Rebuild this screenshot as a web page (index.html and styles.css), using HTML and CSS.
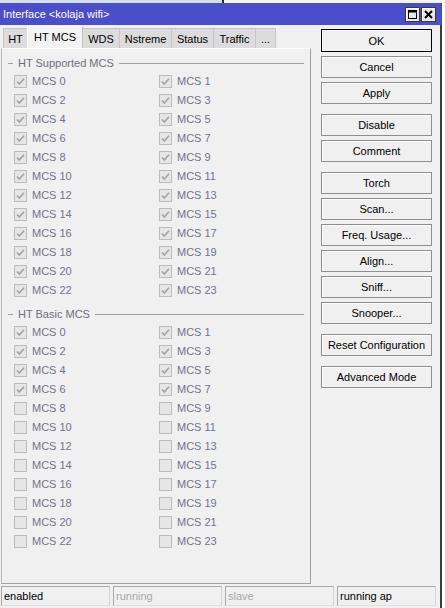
FILE: index.html
```html
<!DOCTYPE html>
<html>
<head>
<meta charset="utf-8">
<link rel="stylesheet" href="styles.css">
</head>
<body>
<div class="strip"></div>
<div class="window">
  <div class="titlebar">
    <span class="title">Interface &lt;kolaja wifi&gt;</span>
    <div class="tbtns">
      <span class="tbtn"><svg width="13" height="13" viewBox="0 0 13 13"><rect x="2.5" y="2.5" width="8" height="8" fill="none" stroke="#000" stroke-width="1"/><line x1="2" y1="3.5" x2="11" y2="3.5" stroke="#000" stroke-width="2"/></svg></span>
      <span class="tbtn"><svg width="13" height="13" viewBox="0 0 13 13"><path d="M3 3 L10 10 M10 3 L3 10" stroke="#000" stroke-width="2" fill="none"/></svg></span>
    </div>
  </div>
  <div class="body">
    <div class="main">
      <div class="left">
        <div class="tabs">
          <div class="tab w24">HT</div>
          <div class="tab active w56">HT MCS</div>
          <div class="tab w36">WDS</div>
          <div class="tab w52">Nstreme</div>
          <div class="tab w42">Status</div>
          <div class="tab w42">Traffic</div>
          <div class="tab w21 last">...</div>
        </div>
        <div class="panel">
          <div class="group">
            <div class="ghead"><span class="gdash"></span><span class="gtitle">HT Supported MCS</span><span class="gline"></span></div>
            <div class="grid" id="g1"></div>
          </div>
          <div class="group g2">
            <div class="ghead"><span class="gdash"></span><span class="gtitle">HT Basic MCS</span><span class="gline"></span></div>
            <div class="grid" id="g2"></div>
          </div>
        </div>
      </div>
      <div class="buttons">
        <div class="bgroup">
          <div class="btn default">OK</div>
          <div class="btn">Cancel</div>
          <div class="btn">Apply</div>
        </div>
        <div class="bgroup">
          <div class="btn">Disable</div>
          <div class="btn">Comment</div>
        </div>
        <div class="bgroup">
          <div class="btn">Torch</div>
          <div class="btn">Scan...</div>
          <div class="btn">Freq. Usage...</div>
          <div class="btn">Align...</div>
          <div class="btn">Sniff...</div>
          <div class="btn">Snooper...</div>
        </div>
        <div class="bgroup">
          <div class="btn">Reset Configuration</div>
        </div>
        <div class="bgroup">
          <div class="btn">Advanced Mode</div>
        </div>
      </div>
    </div>
    <div class="statusbar">
      <div class="cell c1">enabled</div>
      <div class="cell c1 dim">running</div>
      <div class="cell c1 dim">slave</div>
      <div class="cell c4">running ap</div>
    </div>
  </div>
</div>
<script src="script.js"></script>
</body>
</html>
```
FILE: script.js
```js
(function () {
  var checkSvg = '<svg class="cb" width="13" height="13" viewBox="0 0 13 13"><rect x="0.5" y="0.5" width="12" height="12" fill="#e6e6e6" stroke="#bcbcbc"/><polyline points="3,6.5 5.3,9 10,3.8" fill="none" stroke="#a3a3a3" stroke-width="1.6"/></svg>';
  var emptySvg = '<svg class="cb" width="13" height="13" viewBox="0 0 13 13"><rect x="0.5" y="0.5" width="12" height="12" fill="#e6e6e6" stroke="#bcbcbc"/></svg>';
  function fill(id, checkedUpTo) {
    var el = document.getElementById(id);
    var html = '';
    for (var i = 0; i < 24; i++) {
      html += '<div class="item">' + (i < checkedUpTo ? checkSvg : emptySvg) + '<span class="lbl">MCS ' + i + '</span></div>';
    }
    el.innerHTML = html;
  }
  fill('g1', 24);
  fill('g2', 8);
})();
```
FILE: styles.css
```css
html, body {
  margin: 0;
  padding: 0;
  background: #ffffff;
}
body {
  font-family: "Liberation Sans", Arial, sans-serif;
  font-size: 11px;
  color: #000;
  width: 445px;
  height: 608px;
  overflow: hidden;
}
.strip {
  height: 3px;
  width: 445px;
  background: linear-gradient(to right, #d4e0f2 0, #d4e0f2 222px, #2a2a2a 222px, #2a2a2a 224px, #f4f6fa 224px);
}
.window {
  width: 442px;
}
.titlebar {
  height: 22px;
  background: #4a4ecb;
  display: flex;
  align-items: center;
  justify-content: space-between;
}
.title {
  color: #fff;
  padding-left: 3px;
  font-size: 11px;
}
.tbtns {
  display: flex;
  gap: 1px;
  padding-right: 6px;
  margin-top: 1px;
}
.tbtn {
  width: 15px;
  height: 15px;
  box-sizing: border-box;
  border: 1px solid #3a3a3a;
  background: #e8e8e8;
  box-shadow: inset 1px 1px 0 #fff;
  display: flex;
  align-items: center;
  justify-content: center;
}
.body {
  background: #f0f0f0;
  height: 583px;
  box-sizing: border-box;
  border-right: 2px solid #3c3c3c;
}
.main {
  display: flex;
  align-items: flex-start;
}
.left {
  margin-left: 1px;
  width: 310px;
}
.tabs {
  height: 23px;
  display: flex;
  align-items: flex-end;
  padding-left: 2px;
}
.tab {
  height: 20px;
  box-sizing: border-box;
  background: #dcdcdc;
  border-top: 1px solid #c6c6c6;
  border-left: 1px solid #c6c6c6;
  display: flex;
  align-items: center;
  justify-content: center;
  color: #000;
}
.tab.last {
  border-right: 1px solid #c6c6c6;
}
.tab.active {
  height: 22px;
  background: #f3f3f3;
  border-top: 1px solid #fdfdfd;
  border-left: 1px solid #fdfdfd;
  border-right: 1px solid #bdbdbd;
  padding-bottom: 2px;
}
.tab.active + .tab {
  border-left: none;
}
.w24 { width: 24px; }
.w56 { width: 56px; }
.w36 { width: 36px; }
.w52 { width: 52px; }
.w42 { width: 42px; }
.w21 { width: 21px; }
.panel {
  height: 536px;
  box-sizing: border-box;
  border: 1px solid #a0a0a0;
  border-top-color: #fcfcfc;
  border-left-color: #b8b8b8;
  padding-top: 6px;
}
.group.g2 {
  margin-top: 6px;
}
.ghead {
  height: 17px;
  display: flex;
  align-items: center;
  padding-left: 6px;
  padding-right: 6px;
}
.gdash {
  width: 5px;
  height: 1px;
  background: #a0a0a0;
}
.gtitle {
  color: #6f6f7c;
  padding: 0 5px;
  line-height: 17px;
}
.gline {
  flex: 1;
  height: 1px;
  background: #a0a0a0;
}
.grid {
  display: grid;
  grid-template-columns: 145px 145px;
  padding-left: 12px;
}
.item {
  height: 19px;
  display: flex;
  align-items: center;
  gap: 5px;
}
.cb {
  display: block;
  flex: none;
}
.lbl {
  color: #73738a;
  line-height: 19px;
}
.buttons {
  margin-left: 10px;
  width: 111px;
  padding-top: 4px;
  display: flex;
  flex-direction: column;
  gap: 10px;
}
.bgroup {
  display: flex;
  flex-direction: column;
  gap: 4px;
}
.btn {
  height: 22px;
  box-sizing: border-box;
  border: 1px solid #8e8e8e;
  background: #f0f0f0;
  box-shadow: inset 1px 1px 0 #fdfdfd;
  display: flex;
  align-items: center;
  justify-content: center;
  color: #000;
}
.btn.default {
  border-color: #000;
  height: 23px;
}
.statusbar {
  margin-top: 2px;
  display: flex;
  gap: 3px;
  padding-left: 1px;
}
.cell {
  height: 20px;
  box-sizing: border-box;
  border: 1px solid #a8a8a8;
  border-bottom-color: #e0e0e0;
  border-right-color: #d4d4d4;
  padding-left: 2px;
  display: flex;
  align-items: center;
  color: #000;
}
.c1 { width: 109px; }
.c4 { width: 99px; }
.cell.dim {
  color: #a8a8a8;
}
```
